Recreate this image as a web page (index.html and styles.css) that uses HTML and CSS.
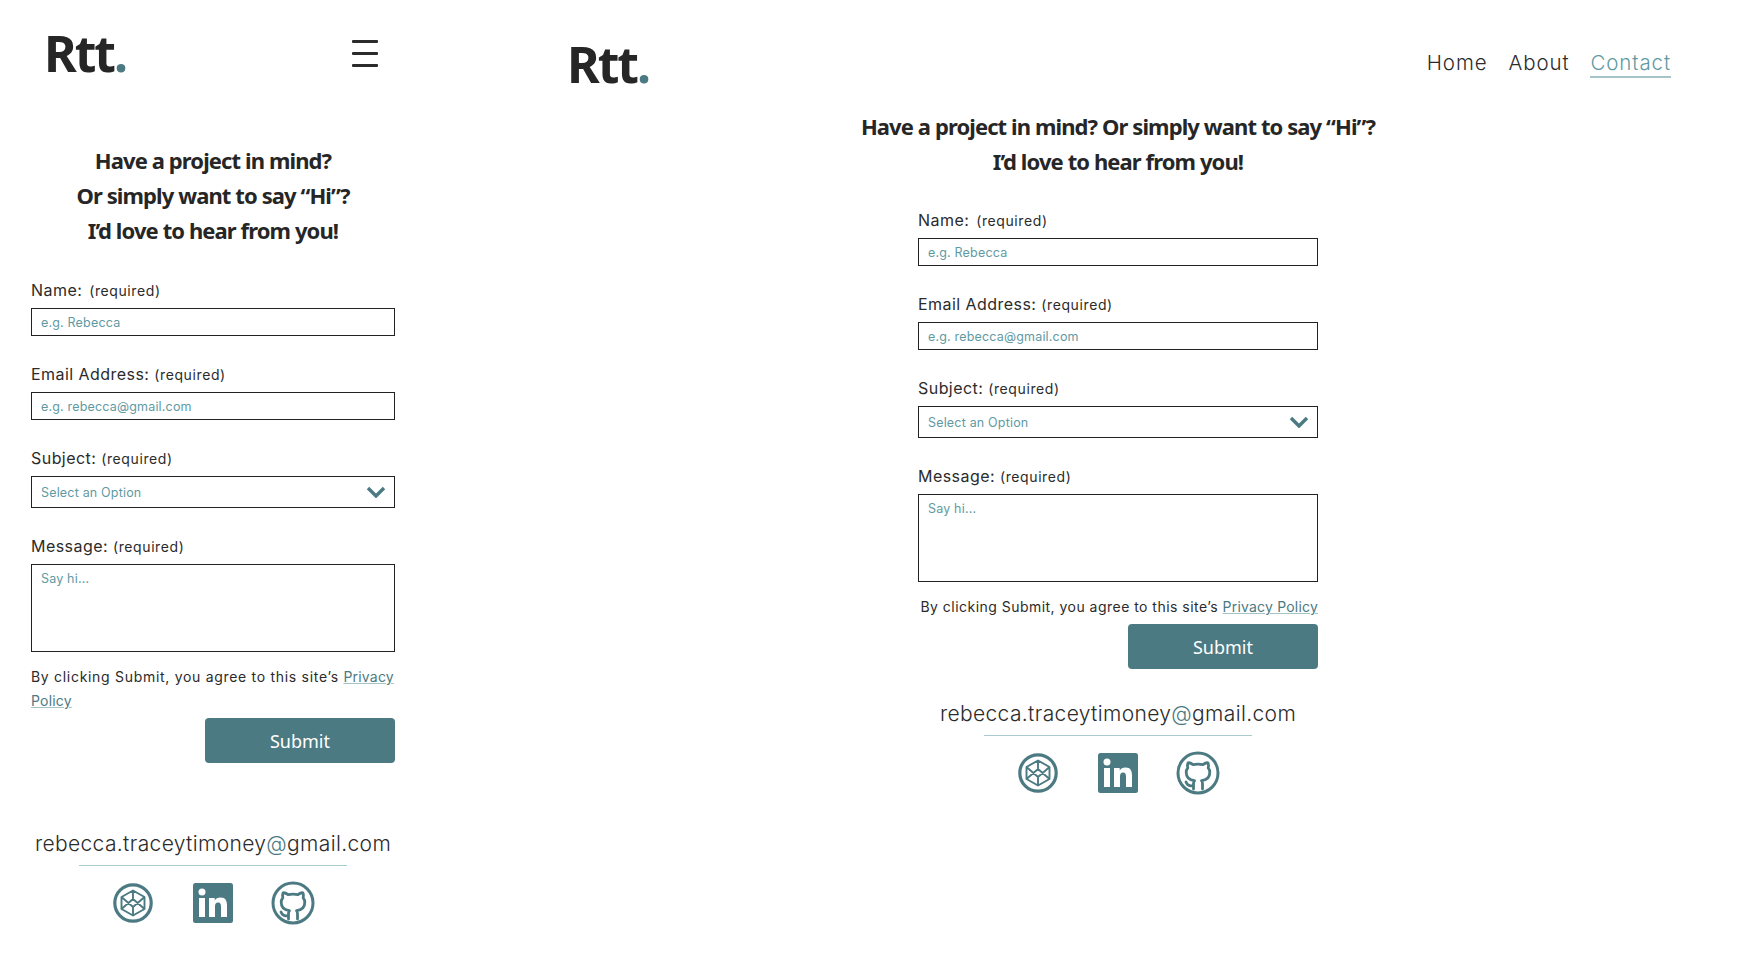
FILE: index.html
```html
<!DOCTYPE html>
<html lang="en">
<head>
    <meta charset="UTF-8">
    <meta name="viewport" content="width=device-width, initial-scale=1.0">
    <title>Contact</title>
    <link rel="stylesheet" href="styles.css">
</head>
<body>
<svg class="icon-defs" width="0" height="0">
    <symbol id="icon-codepen" viewBox="0 0 40 40">
        <circle cx="20" cy="20" r="18.2" fill="none" stroke="currentColor" stroke-width="3.2"/>
        <path d="M20 7.500 31.500 14v12L20 32.500 8.500 26V14zM20 7.500V16M20 24v8.500M8.500 14 20 24 31.500 14M8.500 26 20 16 31.500 26" fill="none" stroke="currentColor" stroke-width="1.900" stroke-linejoin="round"/>
    </symbol>
    <symbol id="icon-linkedin" viewBox="0 0 40 40">
        <rect width="40" height="40" rx="2.500" fill="currentColor"/>
        <circle cx="9" cy="9" r="3.500" fill="#fff"/>
        <rect x="6" y="15" width="6" height="19" fill="#fff"/>
        <path d="M16 15h5.700v2.600c1-1.800 3-3.100 5.800-3.100 5.200 0 6.500 3.400 6.500 8V34h-6V23.800c0-2.500-.5-4.300-2.900-4.300-2.500 0-3.100 1.900-3.100 4.300V34h-6z" fill="#fff"/>
    </symbol>
    <symbol id="icon-github" viewBox="0 0 44 44">
        <circle cx="22" cy="22" r="20" fill="none" stroke="currentColor" stroke-width="3"/>
        <path d="M17.500 38v-5.500c0-1.300.4-2.200 1-2.800-4.600-.5-8.300-2.700-8.300-8.400 0-1.700.6-3.300 1.600-4.500-.3-1-.5-3 .3-5 0 0 2-.4 5 1.900 1.500-.4 3.200-.6 4.900-.6s3.400.2 4.900.6c3-2.300 5-1.900 5-1.900.8 2 .6 4 .3 5 1 1.200 1.600 2.800 1.600 4.500 0 5.700-3.700 7.900-8.300 8.400.7.600 1 1.700 1 3V38M17.500 34.500c-4 1-6.200-.3-7.500-3.500" fill="none" stroke="currentColor" stroke-width="2.800" stroke-linecap="round" stroke-linejoin="round"/>
    </symbol>
</svg>

<div class="page">
    <!-- small screen version -->
    <section class="pane pane-mobile">
        <header class="top-bar">
            <a class="logo">Rtt<span class="logo-dot">.</span></a>
            <button class="burger" aria-label="Menu"><span></span><span></span><span></span></button>
        </header>
        <h1 class="intro">Have a project in mind?<br>Or simply want to say “Hi”?<br>I’d love to hear from you!</h1>
        <form class="contact-form">
            <div class="field">
                <label class="field-label">Name: <small class="name-note">(required)</small></label>
                <input class="text-input" type="text" placeholder="e.g. Rebecca">
            </div>
            <div class="field">
                <label class="field-label">Email Address: <small>(required)</small></label>
                <input class="text-input" type="email" placeholder="e.g. rebecca@gmail.com">
            </div>
            <div class="field">
                <label class="field-label">Subject: <small>(required)</small></label>
                <div class="select-wrap">
                    <select class="select-input"><option>Select an Option</option></select>
                    <svg class="chevron" viewBox="0 0 20 12"><path d="M2 2l8 8 8-8" fill="none" stroke="currentColor" stroke-width="3.400"/></svg>
                </div>
            </div>
            <div class="field">
                <label class="field-label">Message: <small>(required)</small></label>
                <textarea class="text-area" placeholder="Say hi..."></textarea>
            </div>
            <p class="consent">By clicking Submit, you agree to this site’s <a class="policy-link">Privacy Policy</a></p>
            <div class="submit-row"><button class="submit-btn" type="button">Submit</button></div>
        </form>
        <footer class="contact-foot">
            <p class="mail">rebecca.traceytimoney<span class="mail-at">@</span>gmail.com</p>
            <div class="socials">
                <svg class="social"><use href="#icon-codepen"/></svg>
                <svg class="social"><use href="#icon-linkedin"/></svg>
                <svg class="social social-github"><use href="#icon-github"/></svg>
            </div>
        </footer>
    </section>

    <!-- large screen version -->
    <section class="pane pane-desktop">
        <header class="top-bar">
            <a class="logo">Rtt<span class="logo-dot">.</span></a>
            <nav class="main-nav">
                <a class="nav-link">Home</a>
                <a class="nav-link">About</a>
                <a class="nav-link active">Contact</a>
            </nav>
        </header>
        <h1 class="intro">Have a project in mind? Or simply want to say “Hi”?<br>I’d love to hear from you!</h1>
        <form class="contact-form">
            <div class="field">
                <label class="field-label">Name: <small class="name-note">(required)</small></label>
                <input class="text-input" type="text" placeholder="e.g. Rebecca">
            </div>
            <div class="field">
                <label class="field-label">Email Address: <small>(required)</small></label>
                <input class="text-input" type="email" placeholder="e.g. rebecca@gmail.com">
            </div>
            <div class="field">
                <label class="field-label">Subject: <small>(required)</small></label>
                <div class="select-wrap">
                    <select class="select-input"><option>Select an Option</option></select>
                    <svg class="chevron" viewBox="0 0 20 12"><path d="M2 2l8 8 8-8" fill="none" stroke="currentColor" stroke-width="3.400"/></svg>
                </div>
            </div>
            <div class="field">
                <label class="field-label">Message: <small>(required)</small></label>
                <textarea class="text-area" placeholder="Say hi..."></textarea>
            </div>
            <p class="consent">By clicking Submit, you agree to this site’s <a class="policy-link">Privacy Policy</a></p>
            <div class="submit-row"><button class="submit-btn" type="button">Submit</button></div>
        </form>
        <footer class="contact-foot">
            <p class="mail">rebecca.traceytimoney<span class="mail-at">@</span>gmail.com</p>
            <div class="socials">
                <svg class="social"><use href="#icon-codepen"/></svg>
                <svg class="social"><use href="#icon-linkedin"/></svg>
                <svg class="social social-github"><use href="#icon-github"/></svg>
            </div>
        </footer>
    </section>
</div>
</body>
</html>
```

FILE: styles.css
```css
* {
    box-sizing: border-box;
}
body {
    margin: 0;
    background-color: #fff;
    color: #2b2b2b;
    font-family: Inter, "Open Sans", sans-serif;
}
.icon-defs {
    display: block;
    height: 0;
}
.page {
    display: flex;
    align-items: flex-start;
    gap: 48px;
}
.pane-mobile {
    flex: 0 0 426px;
    padding: 0 31px;
}
.pane-desktop {
    flex: 1;
    padding: 0 90px 0 93px;
}

/* header */
.top-bar {
    display: flex;
    justify-content: space-between;
    align-items: center;
}
.pane-mobile .top-bar {
    height: 106px;
    padding: 0 17px 0 13px;
}
.pane-desktop .top-bar {
    height: 127px;
    margin-right: -2px;
}
.logo {
    font-family: "Noto Sans", sans-serif;
    font-size: 50px;
    font-weight: 700;
    letter-spacing: -2.100px;
    line-height: 1;
    color: #262626;
}
.logo-dot {
    color: #4c7a82;
}
.burger {
    display: flex;
    flex-direction: column;
    gap: 9px;
    width: 26px;
    padding: 0;
    border: none;
    background: none;
}
.burger span {
    display: block;
    height: 3px;
    border-radius: 1px;
    background-color: #2b2b2b;
}
.main-nav {
    display: flex;
    gap: 21px;
    margin-top: 1px;
}
.nav-link {
    border-bottom: 2px solid transparent;
    font-size: 20.500px;
    font-weight: 300;
    letter-spacing: 0.900px;
    line-height: 26px;
}
.nav-link.active {
    color: #5f9aa3;
    border-bottom-color: #a5c4c8;
}

/* intro */
.intro {
    margin: 0;
    font-family: "Noto Sans", sans-serif;
    font-size: 22px;
    font-weight: 700;
    letter-spacing: -0.900px;
    line-height: 35px;
    text-align: center;
    color: #262626;
}
.pane-mobile .intro {
    margin-top: 37px;
}
.pane-desktop .intro {
    margin-top: -18px;
}

/* form */
.pane-mobile .contact-form {
    margin-top: 32px;
}
.pane-desktop .contact-form {
    margin-top: 31px;
}
.pane-desktop .contact-form,
.pane-desktop .contact-foot {
    width: 400px;
    margin-left: auto;
    margin-right: auto;
}
.field {
    margin-bottom: 28px;
}
.field-label {
    display: block;
    margin-bottom: 8px;
    font-size: 16px;
    letter-spacing: 0.450px;
    line-height: 20px;
}
.field-label small {
    font-size: 14px;
    letter-spacing: 0.600px;
    line-height: 1;
}
.name-note {
    margin-left: 2px;
}
.text-input,
.select-input,
.text-area {
    display: block;
    width: 100%;
    padding: 0 9px;
    border: 1px solid #222;
    border-radius: 0;
    background-color: #fff;
    color: #5f9aa3;
    font-family: Inter, sans-serif;
    font-size: 12.500px;
    letter-spacing: 0.180px;
}
.text-input {
    height: 28px;
}
.text-input::placeholder,
.text-area::placeholder {
    color: #5f9aa3;
    opacity: 1;
}
.select-wrap {
    position: relative;
}
.select-input {
    height: 32px;
    appearance: none;
}
.chevron {
    position: absolute;
    top: 10px;
    right: 9px;
    width: 20px;
    height: 12px;
    color: #4c7a82;
}
.text-area {
    height: 88px;
    padding-top: 6px;
    resize: none;
}
.field:has(.text-area) {
    margin-bottom: 0;
}
.consent {
    margin: 13px 0 5px;
    font-size: 14px;
    letter-spacing: 0.700px;
    line-height: 24px;
}
.pane-desktop .consent {
    letter-spacing: 0.470px;
    text-align: right;
    white-space: nowrap;
}
.policy-link {
    color: #4c7a82;
    letter-spacing: 0.200px;
    text-decoration: underline;
    text-decoration-color: #a5c4c8;
}
.submit-row {
    display: flex;
    justify-content: flex-end;
}
.submit-btn {
    width: 190px;
    height: 45px;
    border: none;
    border-radius: 4px;
    background-color: #4c7a82;
    color: #fff;
    font-family: "Noto Sans", sans-serif;
    font-size: 18px;
}

/* footer */
.contact-foot {
    text-align: center;
}
.pane-mobile .contact-foot {
    margin-top: 67px;
}
.pane-desktop .contact-foot {
    margin-top: 31px;
}
.mail {
    display: block;
    margin: 0;
    font-size: 21px;
    font-weight: 300;
    letter-spacing: 0.360px;
    line-height: 28px;
}
.mail-at {
    color: #4c7a82;
}
.socials {
    display: flex;
    justify-content: center;
    align-items: center;
    gap: 40px;
    width: 268px;
    margin: 7px auto 0;
    padding-top: 15px;
    border-top: 1px solid #a9cbce;
}
.social {
    width: 40px;
    height: 40px;
    color: #4c7a82;
}
.social-github {
    width: 44px;
    height: 44px;
    margin-left: -2px;
    margin-right: -2px;
}
```
